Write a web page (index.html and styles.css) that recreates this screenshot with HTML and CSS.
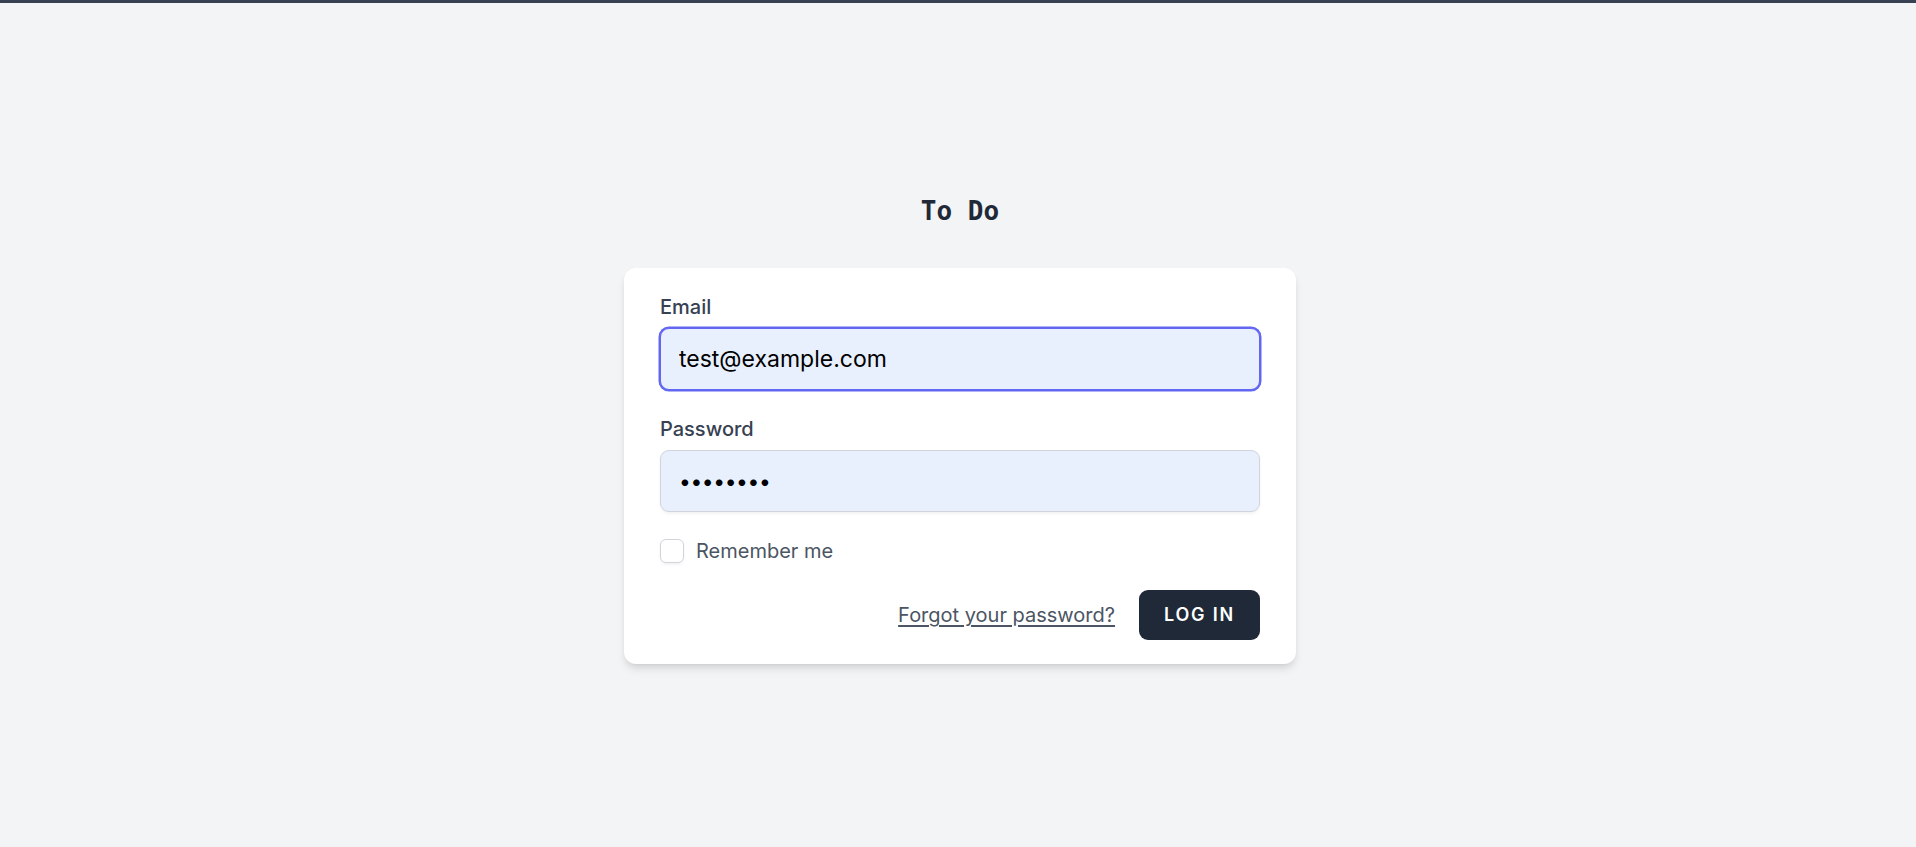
FILE: index.html
```html
<!DOCTYPE html>
<html lang="en">
<head>
<meta charset="utf-8">
<title>To Do</title>
<link rel="stylesheet" href="styles.css">
</head>
<body>
<div class="topbar"></div>
<main class="page">
  <div class="brand">To Do</div>
  <div class="card">
    <form class="login-form">
      <div class="field">
        <label class="field-label" for="email">Email</label>
        <input class="field-input is-autofilled is-focused" id="email" type="email" value="test@example.com">
      </div>
      <div class="field field-spaced">
        <label class="field-label" for="password">Password</label>
        <input class="field-input field-password is-autofilled" id="password" type="password" value="password">
      </div>
      <div class="remember">
        <label class="remember-label" for="remember">
          <input class="checkbox" id="remember" type="checkbox">
          <span class="remember-text">Remember me</span>
        </label>
      </div>
      <div class="actions">
        <a class="forgot-link" href="#">Forgot your password?</a>
        <button class="primary-btn" type="button">Log in</button>
      </div>
    </form>
  </div>
</main>
</body>
</html>
```
FILE: styles.css
```css
* { box-sizing: border-box; }
html, body { margin: 0; padding: 0; }
body {
  background: #f3f4f6;
  font-family: "Inter", "Noto Sans", sans-serif;
  color: #111827;
}
.topbar {
  height: 3px;
  background: #374151;
}
.page {
  min-height: calc(100vh - 3px);
  display: flex;
  flex-direction: column;
  align-items: center;
  justify-content: center;
  padding-left: 4px;
  padding-top: 4px;
}
.brand {
  font-family: "DejaVu Sans Mono", monospace;
  font-weight: 700;
  font-size: 26px;
  line-height: 42px;
  color: #1f2937;
}
.card {
  width: 672px;
  margin-top: 36px;
  padding: 24px 36px;
  background: #fff;
  border-radius: 12px;
  box-shadow: 0 6px 9px -1.5px rgba(0,0,0,0.1), 0 3px 6px -3px rgba(0,0,0,0.1);
}
.field { display: flex; flex-direction: column; }
.field-spaced { margin-top: 24px; }
.field-label {
  font-size: 20px;
  line-height: 30px;
  font-weight: 500;
  color: #374151;
}
.field-input {
  margin-top: 6px;
  width: 100%;
  height: 62px;
  padding: 0 18px;
  font-family: inherit;
  font-size: 23px;
  color: #000;
  border: 1.5px solid #d1d5db;
  border-radius: 9px;
  background: #fff;
  box-shadow: 0 1.5px 3px rgba(0,0,0,0.05);
  outline: none;
}
.field-password { letter-spacing: -0.4px; font-size: 21px; }
.is-autofilled { background: #e8f0fe; }
.is-focused {
  border-color: #6366f1;
  box-shadow: 0 0 0 1.5px #6366f1;
}
.remember { margin-top: 24px; display: flex; }
.remember-label {
  display: flex;
  align-items: center;
  height: 30px;
}
.checkbox {
  appearance: none;
  -webkit-appearance: none;
  margin: 0;
  width: 24px;
  height: 24px;
  border: 1.5px solid #d1d5db;
  border-radius: 6px;
  background: #fff;
  box-shadow: 0 1.5px 3px rgba(0,0,0,0.05);
}
.remember-text {
  margin-left: 12px;
  font-size: 20px;
  line-height: 30px;
  color: #4b5563;
}
.actions {
  margin-top: 24px;
  display: flex;
  align-items: center;
  justify-content: flex-end;
}
.forgot-link {
  font-size: 20px;
  line-height: 30px;
  color: #4b5563;
  text-decoration: underline;
  text-underline-offset: 3px;
}
.primary-btn {
  margin-left: 24px;
  display: inline-flex;
  align-items: center;
  height: 50px;
  padding: 0 24px;
  background: #1f2937;
  border: 1.5px solid transparent;
  border-radius: 9px;
  font-family: inherit;
  font-weight: 600;
  font-size: 18px;
  line-height: 24px;
  letter-spacing: 0.1em;
  text-transform: uppercase;
  color: #fff;
}
```
